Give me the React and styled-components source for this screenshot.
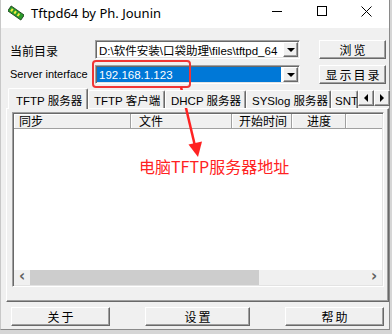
import React from "react";
import styled, { createGlobalStyle } from "styled-components";

const GlobalStyle = createGlobalStyle`
  html, body {
    margin: 0;
    padding: 0;
    background: #d6d6d6;
  }
  body {
    font-family: "Liberation Sans", "Noto Sans CJK SC", sans-serif;
    font-size: 12px;
    color: #000;
  }
`;

const tabs = [
  { label: "TFTP 服务器", w: 80, pad: 7, active: true },
  { label: "TFTP 客户端", w: 77, pad: 5 },
  { label: "DHCP 服务器", w: 81, pad: 5 },
  { label: "SYSlog 服务器", w: 85, pad: 5 },
  { label: "SNTP 服务器", w: 27, pad: 3 },
];

const columns = [
  { label: "同步", w: 117, pad: 5 },
  { label: "文件", w: 101, pad: 8 },
  { label: "开始时间", w: 60, pad: 7 },
  { label: "进度", w: 54, pad: 15 },
];

const App = () => (
  <>
    <GlobalStyle />
    <Window>
      <TitleBar>
        <AppIcon viewBox="0 0 16 16">
          <g transform="rotate(35 8 8)">
            <rect x="0" y="5" width="16" height="6" fill="#2a9a2a" stroke="#1a3a1a" strokeWidth="0.8" />
            <rect x="2" y="6.5" width="2" height="3" fill="#f4e842" />
            <rect x="6" y="6.5" width="2" height="3" fill="#f4e842" />
            <rect x="10" y="6.5" width="2" height="3" fill="#f4e842" />
          </g>
        </AppIcon>
        <Title>Tftpd64 by Ph. Jounin</Title>
        <Controls>
          <CtrlButton>
            <svg width="10" height="10" viewBox="0 0 10 10">
              <line x1="0" y1="5.5" x2="10" y2="5.5" stroke="#000" strokeWidth="1" />
            </svg>
          </CtrlButton>
          <CtrlButton>
            <svg width="10" height="10" viewBox="0 0 10 10">
              <rect x="0.5" y="0.5" width="9" height="9" fill="none" stroke="#000" strokeWidth="1" />
            </svg>
          </CtrlButton>
          <CtrlButton>
            <svg width="11" height="11" viewBox="0 0 11 11">
              <path d="M0.5 0.5 L10.5 10.5 M10.5 0.5 L0.5 10.5" stroke="#000" strokeWidth="1" />
            </svg>
          </CtrlButton>
        </Controls>
      </TitleBar>

      <Body>
        <FormGrid>
          <Label>当前目录</Label>
          <Combo>
            <ComboText>D:\软件安装\口袋助理\files\tftpd_64</ComboText>
            <DropButton>
              <DownTri />
            </DropButton>
          </Combo>
          <Button $w={67}>浏览</Button>

          <Label $latin>Server interface</Label>
          <Combo>
            <ComboText $selected>192.168.1.123</ComboText>
            <DropButton>
              <DownTri />
            </DropButton>
          </Combo>
          <Button $w={67}>显示目录</Button>
        </FormGrid>

        <TabStrip>
          {tabs.map(t => (
            <Tab key={t.label} $w={t.w} $pad={t.pad} $active={t.active}>
              {t.label}
            </Tab>
          ))}
          <ArrowButton>
            <Tri $dir="left" />
          </ArrowButton>
          <ArrowButton>
            <Tri $dir="right" />
          </ArrowButton>
        </TabStrip>

        <Panel>
          <ListView>
            <HeaderRow>
              {columns.map(c => (
                <HeaderCell key={c.label} $w={c.w} $pad={c.pad}>
                  {c.label}
                </HeaderCell>
              ))}
              <HeaderCell $fill />
            </HeaderRow>
            <ListBody />
            <HScroll>
              <ScrollArrow>‹</ScrollArrow>
              <Track>
                <Thumb />
              </Track>
              <ScrollArrow>›</ScrollArrow>
            </HScroll>
          </ListView>
        </Panel>

        <ButtonRow>
          <Button $w={99}>关于</Button>
          <Button $w={105}>设置</Button>
          <Button $w={99}>帮助</Button>
        </ButtonRow>
      </Body>

      <Highlight />
      <Arrow width="40" height="80" viewBox="170 84 40 80">
        <line x1="181" y1="87" x2="195" y2="146" stroke="#f22" strokeWidth="2.5" />
        <polygon points="198,157 188.5,144.5 202,141.5" fill="#f22" />
      </Arrow>
      <Note>电脑TFTP服务器地址</Note>
    </Window>
  </>
);

export default App;

const Window = styled.div`
  position: relative;
  width: 390px;
  height: 330px;
  box-sizing: border-box;
  background: #f0f0f0;
  border-left: 1px solid #c8c8c8;
  border-right: 1px solid #8a8a8a;
  border-bottom: 1px solid #8a8a8a;
  display: flex;
  flex-direction: column;
`;

const TitleBar = styled.div`
  height: 28px;
  flex-shrink: 0;
  background: #fff;
  display: flex;
  align-items: center;
  padding-left: 7px;
`;

const AppIcon = styled.svg`
  width: 16px;
  height: 16px;
  margin-right: 7px;
  margin-top: -2px;
`;

const Title = styled.span`
  font-family: "Noto Sans", "Liberation Sans", sans-serif;
  font-size: 13px;
  color: #000;
  margin-top: -3px;
`;

const Controls = styled.div`
  margin-left: auto;
  display: flex;
  height: 100%;
`;

const CtrlButton = styled.div`
  width: 45px;
  height: 100%;
  display: flex;
  align-items: center;
  justify-content: center;
  margin-top: -3px;
`;

const Body = styled.div`
  flex: 1;
  display: flex;
  flex-direction: column;
  padding-top: 12px;
`;

const FormGrid = styled.div`
  display: grid;
  grid-template-columns: 85px 205px 86px;
  grid-auto-rows: 19px;
  row-gap: 6px;
  padding-left: 9px;
  & > :nth-child(3n) {
    justify-self: end;
  }
`;

const Label = styled.div`
  display: flex;
  align-items: center;
  font-family: ${p =>
    p.$latin ? '"Liberation Sans", sans-serif' : '"Noto Sans CJK SC", sans-serif'};
  font-size: ${p => (p.$latin ? "11px" : "12px")};
  margin-top: ${p => (p.$latin ? "-2px" : "1px")};
  white-space: nowrap;
`;

const Combo = styled.div`
  box-sizing: border-box;
  display: flex;
  align-items: stretch;
  background: #fff;
  border-style: solid;
  border-width: 1px;
  border-color: #a0a0a0 #fff #fff #a0a0a0;
  box-shadow: inset 1px 1px 0 #696969, inset -1px -1px 0 #e3e3e3;
  padding: 1px;
`;

const ComboText = styled.div`
  flex: 1;
  margin-right: 2px;
  padding-left: 2px;
  display: flex;
  align-items: center;
  font-family: "Liberation Sans", "Noto Sans CJK SC", sans-serif;
  font-size: 11.5px;
  white-space: nowrap;
  overflow: hidden;
  background: ${p => (p.$selected ? "#0078d7" : "transparent")};
  color: ${p => (p.$selected ? "#fff" : "#000")};
`;

const DropButton = styled.div`
  width: 15px;
  flex-shrink: 0;
  box-sizing: border-box;
  background: #f0f0f0;
  border-style: solid;
  border-width: 1px;
  border-color: #fff #696969 #696969 #fff;
  box-shadow: inset -1px -1px 0 #a0a0a0;
  display: flex;
  align-items: center;
  justify-content: center;
`;

const DownTri = styled.span`
  width: 0;
  height: 0;
  border-left: 4px solid transparent;
  border-right: 4px solid transparent;
  border-top: 4px solid #000;
  margin-top: 1px;
`;

const Button = styled.div`
  box-sizing: border-box;
  width: ${p => (p.$w ? `${p.$w}px` : "auto")};
  height: 19px;
  background: #f0f0f0;
  border-style: solid;
  border-width: 1px;
  border-color: #fff #696969 #696969 #fff;
  box-shadow: inset -1px -1px 0 #a0a0a0;
  display: flex;
  align-items: center;
  justify-content: center;
  font-family: "Noto Sans CJK SC", sans-serif;
  font-size: 12px;
  letter-spacing: 2px;
  padding-left: 2px;
  white-space: nowrap;
`;

const TabStrip = styled.div`
  margin-top: 4px;
  margin-left: 7px;
  width: 381px;
  height: 20px;
  display: flex;
  align-items: flex-end;
  position: relative;
  z-index: 1;
`;

const Tab = styled.div`
  box-sizing: border-box;
  width: ${p => p.$w}px;
  flex-shrink: 0;
  height: ${p => (p.$active ? "21px" : "18px")};
  margin-bottom: ${p => (p.$active ? "-1px" : "0")};
  background: #f0f0f0;
  border-style: solid;
  border-width: 1px 1px 0 1px;
  border-color: #fff #696969 #696969 #fff;
  box-shadow: inset -1px 0 0 #a0a0a0;
  border-radius: 2px 2px 0 0;
  padding-left: ${p => p.$pad}px;
  padding-top: ${p => (p.$active ? "2px" : "0")};
  display: flex;
  align-items: center;
  font-family: "Liberation Sans", "Noto Sans CJK SC", sans-serif;
  font-size: 11.5px;
  white-space: nowrap;
  overflow: hidden;
`;

const ArrowButton = styled.div`
  box-sizing: border-box;
  width: 16px;
  height: 16px;
  margin-bottom: 2px;
  flex-shrink: 0;
  background: #f0f0f0;
  border-style: solid;
  border-width: 1px;
  border-color: #fff #696969 #696969 #fff;
  box-shadow: inset -1px -1px 0 #a0a0a0;
  display: flex;
  align-items: center;
  justify-content: center;
`;

const Tri = styled.span`
  width: 0;
  height: 0;
  border-top: 4px solid transparent;
  border-bottom: 4px solid transparent;
  border-left: ${p => (p.$dir === "right" ? "4px solid #000" : "none")};
  border-right: ${p => (p.$dir === "left" ? "4px solid #000" : "none")};
`;

const Panel = styled.div`
  margin-left: 5px;
  width: 383px;
  height: 194px;
  box-sizing: border-box;
  border-style: solid;
  border-width: 1px;
  border-color: #fff #696969 #696969 #fff;
  box-shadow: inset -1px -1px 0 #a0a0a0;
  padding: 3px 4px 0 5px;
`;

const ListView = styled.div`
  width: 372px;
  height: 175px;
  box-sizing: border-box;
  background: #fff;
  border-style: solid;
  border-width: 1px;
  border-color: #a0a0a0 #fff #fff #a0a0a0;
  box-shadow: inset 1px 1px 0 #696969, inset -1px -1px 0 #e3e3e3;
  padding: 1px;
  display: flex;
  flex-direction: column;
`;

const HeaderRow = styled.div`
  height: 15px;
  display: flex;
  background: #f0f0f0;
  flex-shrink: 0;
`;

const HeaderCell = styled.div`
  box-sizing: border-box;
  width: ${p => (p.$fill ? "auto" : `${p.$w}px`)};
  flex: ${p => (p.$fill ? "1" : "none")};
  padding-left: ${p => p.$pad || 0}px;
  border-right: ${p => (p.$fill ? "none" : "1px solid #a0a0a0")};
  border-bottom: 1px solid #a0a0a0;
  box-shadow: inset 1px 1px 0 #fff;
  display: flex;
  align-items: center;
  font-family: "Noto Sans CJK SC", sans-serif;
  font-size: 12px;
  line-height: 1;
  white-space: nowrap;
`;

const ListBody = styled.div`
  flex: 1;
  background: #fff;
`;

const HScroll = styled.div`
  height: 15px;
  display: flex;
  background: #f0f0f0;
  flex-shrink: 0;
`;

const ScrollArrow = styled.div`
  width: 16px;
  display: flex;
  align-items: center;
  justify-content: center;
  font-family: "DejaVu Sans", sans-serif;
  font-weight: bold;
  font-size: 15px;
  color: #606060;
  line-height: 1;
  padding-bottom: 2px;
  box-sizing: border-box;
`;

const Track = styled.div`
  flex: 1;
  display: flex;
  align-items: stretch;
`;

const Thumb = styled.div`
  width: 229px;
  background: #cdcdcd;
`;

const ButtonRow = styled.div`
  margin-top: 5px;
  padding: 0 5px 0 10px;
  display: flex;
  justify-content: space-between;
`;

const Highlight = styled.div`
  position: absolute;
  left: 91px;
  top: 60px;
  width: 99px;
  height: 28px;
  box-sizing: border-box;
  border: 2px solid #f03535;
  border-radius: 4px;
`;

const Arrow = styled.svg`
  position: absolute;
  left: 169px;
  top: 84px;
`;

const Note = styled.div`
  position: absolute;
  left: 138px;
  top: 157px;
  font-family: "Noto Sans CJK SC", sans-serif;
  font-size: 16px;
  line-height: 18px;
  color: #f22;
  white-space: nowrap;
`;
